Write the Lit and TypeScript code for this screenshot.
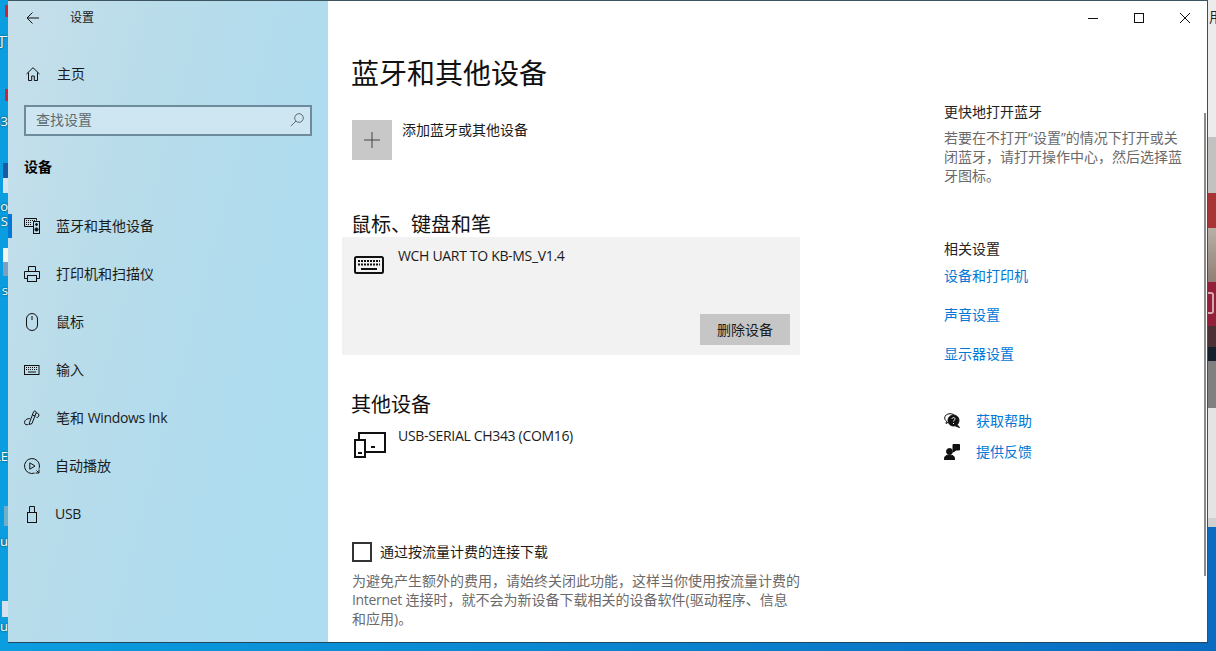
import { LitElement, html, css, svg } from "lit";
import { customElement } from "lit/decorators.js";

const ic = (w: number, h: number, body: unknown, cls = "") =>
  html`<svg class="ic ${cls}" width=${w} height=${h} viewBox="0 0 ${w} ${h}" fill="none" stroke="#111" stroke-width="1">${body}</svg>`;

const navIcons = {
  devices: ic(16, 16, svg`<path d="M10 8.500H.5V.5h12v2"/><path d="M2 2.500h1M4 2.500h1M6 2.500h1M8 2.500h1M10 2.500h1M2 4.500h1M4 4.500h1M6 4.500h1M2 6.500h5" stroke-dasharray="1 1"/><rect x="9.500" y="3.500" width="6" height="12"/><circle cx="12.500" cy="6.500" r="1" fill="#111"/><circle cx="12.500" cy="11.500" r="1.600" fill="#111"/>`),
  printer: ic(16, 16, svg`<path d="M4.500 5V.5h7V5"/><path d="M3.500 12.500H.5V5.500h15v7h-3"/><rect x="3.500" y="9.500" width="9" height="6"/>`),
  mouse: ic(12, 18, svg`<path d="M.5 6a5.500 5.500 0 0 1 11 0v6a5.500 5.500 0 0 1-11 0z"/><path d="M6 3v4"/>`),
  keyboard: ic(16, 10, svg`<rect x=".5" y=".5" width="14.500" height="9"/><path d="M2 2.500h12M2 4.500h12" stroke-dasharray="1 1"/><path d="M4 7h8"/>`),
  pen: ic(16, 16, svg`<path d="M5.500 12.500 9.500 2c.6-1.700 3.200-.8 2.600.9L8 13.500l-2.500 1z"/><path d="M8.500 5l3 1.200M12 3c2.200 0 3.500 1.500 2.700 3.200-.4.9-1.200 1.300-2.200 1.300M5.800 8.500C3 8.500.5 10 .5 12.500c0 2.200 2.300 2.800 4 1.800"/>`),
  autoplay: ic(16, 16, svg`<path d="M10.500 15.100A7.500 7.500 0 1 1 15.500 8c0 .9-.2 1.800-.5 2.600"/><path d="M5.800 4.800v6.400L11 8z"/><path d="M15 11.500v3.500h-3.500M15 15l-2.500-2.500"/>`),
  usb: ic(10, 17, svg`<rect x=".5" y="6.500" width="9" height="10"/><path d="M2.500 6V.5h5V6"/><path d="M4 3h.1M6 3h.1" stroke-width="1.400"/>`),
};

const nav = [
  ["devices", "蓝牙和其他设备"],
  ["printer", "打印机和扫描仪"],
  ["mouse", "鼠标"],
  ["keyboard", "输入"],
  ["pen", html`笔和 <span class="latin">Windows Ink</span>`],
  ["autoplay", html`<span class="shift">自动播放</span>`],
  ["usb", html`<span class="latin shift">USB</span>`],
] as const;

const fragments: [number, string][] = [
  [35, "丁"], [115, "33"], [200, "o"], [215, "S"], [284, "s"], [450, "LE"], [535, "Du"], [620, "u"],
];

@customElement("app-root")
export class AppRoot extends LitElement {
  static styles = css`
    :host {
      display: block;
      width: 1216px;
      height: 651px;
      overflow: hidden;
      background: linear-gradient(90deg, #0a9ddf, #0a6cc0);
      font: 14px/20px "Open Sans", "Noto Sans CJK SC", sans-serif;
      color: #1b1b1b;
    }
    .latin { letter-spacing: -0.32px; }
    .shift { margin-left: -1px; }
    .screen { display: flex; height: 651px; }
    .strip-left {
      position: relative;
      width: 8px;
      height: 643px;
      overflow: hidden;
      background: #0a9ddf;
      flex: none;
    }
    .frag {
      position: absolute;
      right: 0;
      white-space: nowrap;
      color: #fff;
      font-size: 13px;
      line-height: 12px;
      text-shadow: 0 0 2px #033;
    }
    .mark { position: absolute; }
    .m-red { left: 5px; width: 3px; height: 12px; background: #c8243a; }
    .m-a { top: 5px; }
    .m-b { top: 89px; }
    .m-app1 { left: 3px; top: 163px; width: 5px; height: 30px; background: linear-gradient(#1a5aa0 50%, #d8e4ee 50%); }
    .m-app2 { left: 3px; top: 248px; width: 5px; height: 28px; background: linear-gradient(#f4f4ee 50%, #7f9fc0 50%); }
    .m-app3 { left: 4px; top: 506px; width: 4px; height: 20px; background: #6fb0cc; }
    .m-app4 { left: 2px; top: 601px; width: 6px; height: 16px; background: #d6e2ee; }
    .window {
      width: 1200px;
      height: 643px;
      flex: none;
      display: flex;
      box-sizing: border-box;
      border-top: 1px solid #3c5560;
      border-bottom: 1px solid #22475c;
      box-shadow: inset -1px 0 0 #4a4a4a, inset 1px 0 0 #1d6a8c;
      background: #fff;
    }
    .sidebar {
      width: 320px;
      flex: none;
      position: relative;
      background: linear-gradient(105deg, #c6dfea 0%, #b8dcea 35%, #afdcef 70%, #addcf0 100%);
    }
    .head { display: flex; align-items: center; height: 34px; padding-left: 18px; }
    .head .title { margin-left: 30px; font-size: 12px; }
    .home { display: flex; align-items: center; height: 40px; margin-top: 19px; padding-left: 18px; }
    .home span { margin-left: 17px; }
    .search {
      margin: 11px 16px 0;
      height: 31px;
      box-sizing: border-box;
      border: 2px solid #6e8b9c;
      background: #cde6f2;
      display: flex;
      align-items: center;
      justify-content: space-between;
      padding: 0 6px 2px 10px;
      color: #5f6b70;
    }
    .group { margin: 19px 0 0 16px; height: 24px; line-height: 24px; font-weight: 700; color: #000; }
    .nav { margin-top: 23px; }
    .nav-row { display: flex; align-items: center; height: 48px; padding-left: 16px; position: relative; }
    .nav-icon { width: 32px; display: flex; flex: none; box-sizing: border-box; }
    .nav-icon svg { flex: none; }
    .nudge2 { padding-left: 2px; }
    .nudge3 { padding-left: 3px; }
    .sel { position: absolute; left: 0; top: 12px; width: 4px; height: 24px; background: #0078d7; }
    .main { flex: 1; position: relative; display: flex; flex-direction: column; }
    .controls { display: flex; justify-content: flex-end; height: 34px; }
    .ctl { width: 46px; display: flex; align-items: center; justify-content: center; }
    .body { display: flex; flex: 1; }
    .col { width: 448px; margin-left: 24px; flex: none; }
    h1 { margin: 18px 0 0 -1px; font-size: 28px; line-height: 40px; font-weight: 400; color: #111; }
    .add { display: flex; margin-top: 27px; height: 40px; }
    .tile { width: 40px; height: 40px; background: #c8c8c8; display: flex; align-items: center; justify-content: center; }
    .add span { margin-left: 10px; }
    h2 { margin: 0 0 0 -1px; height: 26px; font-size: 20px; line-height: 28px; font-weight: 400; color: #111; }
    .h-mouse { margin-top: 51px; }
    .card {
      margin-left: -10px;
      width: 458px;
      height: 118px;
      background: #f2f2f2;
      display: flex;
      flex-direction: column;
      justify-content: space-between;
    }
    .dev { display: flex; padding-left: 12px; }
    .dev .name { margin-left: 14px; line-height: 19px; }
    .card .dev { padding-top: 9px; }
    .card .dev svg { margin-top: 10px; }
    .btn {
      align-self: flex-end;
      margin: 0 10px 10px 0;
      width: 90px;
      height: 31px;
      background: #c6c6c6;
      text-align: center;
      line-height: 31px;
    }
    .h-other { margin-top: 36px; }
    .device2 { margin: 9px 0 0 -10px; height: 32px; }
    .device2 svg { margin-top: 6px; }
    .device2 .name { margin-left: 12px; }
    .metered { display: flex; align-items: center; margin-top: 84px; height: 20px; }
    .box { width: 20px; height: 20px; box-sizing: border-box; border: 2px solid #333; margin-right: 8px; }
    .hint { margin: 9px 0 0; line-height: 19px; color: #6a6a6a; white-space: nowrap; }
    .side { margin-left: 144px; width: 240px; }
    .side h3 { margin: 67px 0 0; font-size: 14px; line-height: 20px; font-weight: 400; color: #222; }
    .side .desc { margin: 6px 0 0; line-height: 19px; color: #6a6a6a; white-space: nowrap; }
    .side h3.rel { margin-top: 54px; }
    .link { display: block; color: #0078d7; line-height: 20px; margin-top: 19px; }
    .links { margin-top: -12px; }
    .help { display: flex; align-items: center; height: 20px; margin-top: 11px; }
    .help svg { width: 16px; margin-right: 16px; flex: none; }
    .help.first { margin-top: 47px; }
    .help span { color: #0078d7; }
    .scroll { position: absolute; right: 2px; top: 112px; width: 2px; height: 463px; background: #8a8a8a; }
    .strip-right { width: 8px; flex: none; height: 651px; display: flex; flex-direction: column; }
    .seg { flex: none; }
    .s0 { height: 137px; background: #ececec; position: relative; overflow: hidden; }
    .s0 span { position: absolute; left: 1px; top: 7px; font-size: 14px; white-space: nowrap; color: #222; }
    .s1 { height: 56px; background: #c2c2c0; }
    .s2 { height: 35px; background: #a83636; }
    .s3 { height: 54px; background: linear-gradient(#b8b0a6, #8f7f74); }
    .s4 { height: 44px; background: #93203a; position: relative; }
    .s4 i { position: absolute; left: 0; top: 10px; width: 6px; height: 22px; border: 2px solid #d8a8b0; border-radius: 0 3px 3px 0; box-sizing: border-box; border-left: 0; }
    .s5 { height: 21px; background: #4c3036; }
    .s6 { height: 14px; background: #14202c; }
    .s7 { height: 47px; background: #808080; }
    .s8 { height: 110px; background: #e4e4e4; }
    .s9 { height: 9px; background: #d0d0d0; }
    .s10 { flex: 1; background: #0a6cc0; }
  `;

  render() {
    return html`<div class="screen">
      <div class="strip-left">
        <div class="mark m-red m-a"></div>
        <div class="mark m-red m-b"></div>
        <div class="mark m-app1"></div>
        <div class="mark m-app2"></div>
        <div class="mark m-app3"></div>
        <div class="mark m-app4"></div>
        ${fragments.map(([y, t]) => html`<span class="frag" style="top:${y}px">${t}</span>`)}
      </div>
      <div class="window">
        <aside class="sidebar">
          <div class="head">
            ${ic(14, 12, svg`<path d="M13 6H1M6.500.5 1 6l5.500 5.500"/>`)}
            <span class="title">设置</span>
          </div>
          <div class="home">
            ${ic(14, 14, svg`<path d="M.5 7 7 .7 13.500 7M2.500 5.500v8h3.200V9h2.600v4.500h3.200v-8"/>`)}
            <span>主页</span>
          </div>
          <div class="search">
            <span>查找设置</span>
            ${ic(14, 14, svg`<circle cx="9" cy="5" r="4.300" stroke="#5f6b70"/><path d="M6 8 .8 13.200" stroke="#5f6b70"/>`)}
          </div>
          <div class="group">设备</div>
          <div class="nav">
            ${nav.map(([k, t], i) => html`<div class="nav-row">
              ${i === 0 ? html`<div class="sel"></div>` : ""}
              <span class="nav-icon ${k === "mouse" ? "nudge2" : k === "usb" ? "nudge3" : ""}">${navIcons[k]}</span>
              <span>${t}</span>
            </div>`)}
          </div>
        </aside>
        <main class="main">
          <div class="controls">
            <div class="ctl">${ic(10, 10, svg`<path d="M0 5.500h10"/>`)}</div>
            <div class="ctl">${ic(10, 10, svg`<rect x=".5" y=".5" width="9" height="9"/>`)}</div>
            <div class="ctl">${ic(10, 10, svg`<path d="M0 0l10 10M10 0 0 10"/>`)}</div>
          </div>
          <div class="body">
            <section class="col">
              <h1>蓝牙和其他设备</h1>
              <div class="add">
                <div class="tile">${ic(16, 16, svg`<path d="M8 0v16M0 8h16" stroke="#444"/>`)}</div>
                <span>添加蓝牙或其他设备</span>
              </div>
              <h2 class="h-mouse">鼠标、键盘和笔</h2>
              <div class="card">
                <div class="dev">
                  ${ic(30, 18, svg`<rect x="1" y="1" width="28" height="16" rx="1.500" stroke-width="2"/><path d="M4 5h22M4 8.500h22" stroke-dasharray="2 1" stroke-width="2"/><path d="M7 13h16" stroke-width="2"/>`)}
                  <span class="name latin">WCH UART TO KB-MS_V1.4</span>
                </div>
                <div class="btn">删除设备</div>
              </div>
              <h2 class="h-other">其他设备</h2>
              <div class="dev device2">
                ${ic(32, 26, svg`<path d="M5 8V1h26v19H12" stroke-width="2"/><rect x="1" y="8" width="10" height="17" stroke-width="2"/><path d="M4 21h4M17 15h4" stroke-width="2"/>`)}
                <span class="name latin">USB-SERIAL CH343 (COM16)</span>
              </div>
              <div class="metered"><div class="box"></div><span>通过按流量计费的连接下载</span></div>
              <p class="hint">为避免产生额外的费用，请始终关闭此功能，这样当你使用按流量计费的<br /><span class="latin">Internet</span> 连接时，就不会为新设备下载相关的设备软件(驱动程序、信息<br />和应用)。</p>
            </section>
            <section class="side">
              <h3>更快地打开蓝牙</h3>
              <p class="desc">若要在不打开“设置”的情况下打开或关<br />闭蓝牙，请打开操作中心，然后选择蓝<br />牙图标。</p>
              <h3 class="rel">相关设置</h3>
              <div class="links">
                <a class="link">设备和打印机</a>
                <a class="link">声音设置</a>
                <a class="link">显示器设置</a>
              </div>
              <div class="help first">
                ${ic(16, 16, svg`<path d="M6 .7C3 .7.7 2.600.7 5c0 1.300.7 2.400 1.800 3.200L2 10.500l2.600-1.400"/><path d="M6 .7c2.500 0 4.300 1 5 2.500"/><circle cx="9.500" cy="7.500" r="5.500" fill="#111"/><path d="M13 11.500l2.500 3-4-1.500" fill="#111"/><path d="M8 6c0-2 3-2 3 0 0 1.200-1.500 1.200-1.500 2.500M9.500 10v1" stroke="#fff"/>`)}
                <span>获取帮助</span>
              </div>
              <div class="help">
                ${ic(16, 16, svg`<circle cx="5.500" cy="7.500" r="3" fill="#111"/><path d="M.5 16v-1.500c0-2.500 2-3.500 5-3.500s5 1 5 3.500V16z" fill="#111"/><path d="M9 .5h6.500v5.500H12l-2.500 2V6H9z" fill="#111"/>`)}
                <span>提供反馈</span>
              </div>
            </section>
          </div>
          <div class="scroll"></div>
        </main>
      </div>
      <div class="strip-right">
        <div class="seg s0"><span>用</span></div>
        <div class="seg s1"></div>
        <div class="seg s2"></div>
        <div class="seg s3"></div>
        <div class="seg s4"><i></i></div>
        <div class="seg s5"></div>
        <div class="seg s6"></div>
        <div class="seg s7"></div>
        <div class="seg s8"></div>
        <div class="seg s9"></div>
        <div class="seg s10"></div>
      </div>
    </div>`;
  }
}
